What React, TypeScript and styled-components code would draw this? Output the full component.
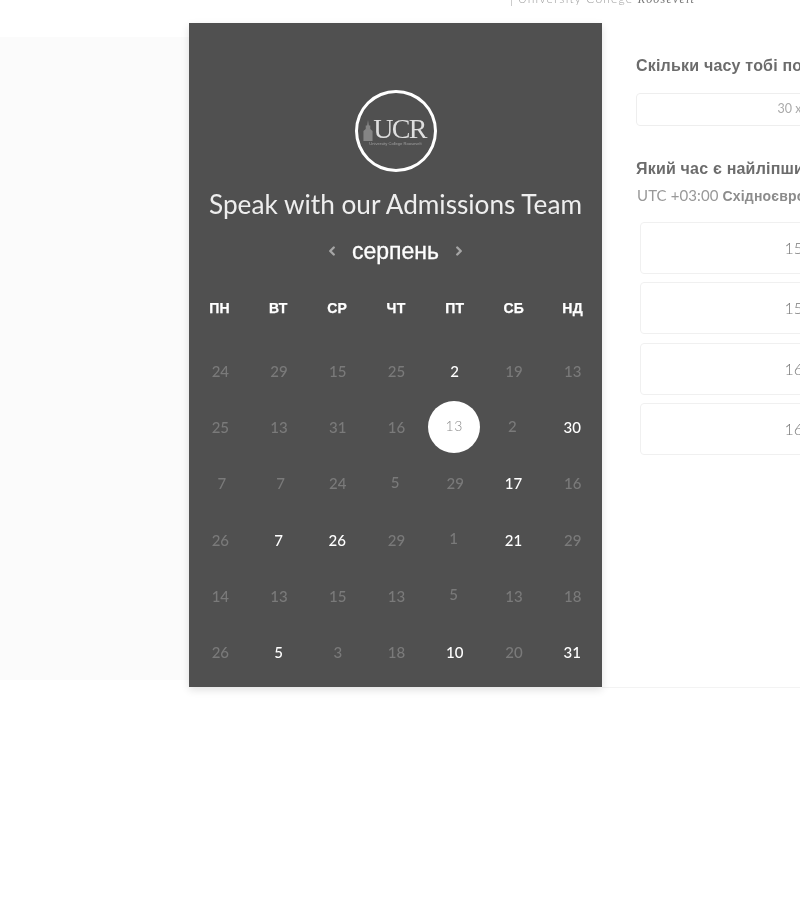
import React from "react";
import styled, { createGlobalStyle } from "styled-components";
import { ChevronLeft, ChevronRight } from "lucide-react";

const Global = createGlobalStyle`
  html, body { margin: 0; padding: 0; background: #fff; overflow: hidden; }
  body { width: 800px; height: 900px; font-family: "Liberation Sans", Arial, sans-serif; }
`;

const Page = styled.div`
  width: 800px;
  height: 900px;
  overflow: hidden;
  display: flex;
  flex-direction: column;
  will-change: opacity;
`;

const Header = styled.header`
  height: 23px;
  flex: none;
  overflow: hidden;
  display: flex;
  align-items: flex-start;
  padding-left: 511px;
`;

const Brand = styled.div`
  margin-top: -8px;
  height: 14px;
  padding-left: 6px;
  border-left: 1px solid #ccc;
  font: 300 12px/13px "Lato", sans-serif;
  letter-spacing: 1.2px;
  color: #999;
  white-space: nowrap;
`;

const BrandItalic = styled.span`
  font: italic 400 12px/13px "Liberation Serif", serif;
  color: #777;
`;

const Main = styled.main`
  display: flex;
  height: 664px;
  flex: none;
`;

const LeftPane = styled.div`
  width: 189px;
  flex: none;
  margin: 14px 0 7px;
  background: #fbfbfb;
`;

const Panel = styled.section`
  width: 413px;
  flex: none;
  box-sizing: border-box;
  padding: 67px 0 7px 2px;
  background: #505050;
  box-shadow: 0 3px 8px rgba(0, 0, 0, 0.12);
  display: flex;
  flex-direction: column;
  align-items: center;
  position: relative;
`;

const LogoCircle = styled.div`
  width: 82px;
  height: 82px;
  margin-left: -2px;
  box-sizing: border-box;
  border: 3px solid #fff;
  border-radius: 50%;
  display: flex;
  flex-direction: column;
  align-items: center;
  justify-content: center;
`;

const LogoRow = styled.div`
  display: flex;
  align-items: flex-end;
  height: 25px;
  margin-top: 2px;
`;

const LogoLetters = styled.span`
  font: 400 28px/25px "Liberation Serif", serif;
  letter-spacing: -1.7px;
  color: #dedede;
  margin-right: 2px;
`;

const LogoCaption = styled.span`
  font: 400 4.1px/6px "Liberation Sans", sans-serif;
  color: #a0a0a0;
  white-space: nowrap;
`;

const Title = styled.h1`
  margin: 16px 0 0 -2px;
  font: 400 26.2px/32px "Lato", sans-serif;
  color: #eeeeee;
  white-space: nowrap;
`;

const MonthRow = styled.div`
  margin: 16px 0 0 -2px;
  height: 30px;
  display: flex;
  align-items: center;
  gap: 13px;
  color: #a6a6a6;
`;

const MonthName = styled.span`
  font: 400 23px/30px "Liberation Sans", sans-serif;
  -webkit-text-stroke: 0.3px #fff;
  color: #fff;
`;

const Weekdays = styled.div`
  margin: 32px 0 0 -1px;
  align-self: stretch;
  display: grid;
  grid-template-columns: repeat(7, 1fr);
`;

const Weekday = styled.div`
  text-align: center;
  font: 700 14px/20px "Liberation Sans", sans-serif;
  letter-spacing: 0.2px;
  -webkit-text-stroke: 0.25px #fff;
  color: #fff;
`;

const Days = styled.div`
  margin-top: 25px;
  align-self: stretch;
  display: grid;
  grid-template-columns: repeat(7, 1fr);
  grid-auto-rows: 56.2px;
`;

const DayCell = styled.div`
  display: flex;
  align-items: center;
  justify-content: center;
`;

const DayNumber = styled.span<{ $kind: string }>`
  font: 500 15px/20px "Lato", sans-serif;
  color: ${(p) => (p.$kind === "bright" ? "#fff" : "#7a7a7a")};
  padding-bottom: ${(p) => (p.$kind === "nudged" ? "3px" : "0")};
  padding-right: ${(p) => (p.$kind === "nudged" ? "3px" : p.$kind === "bright" ? "1px" : "0")};
  padding-left: ${(p) => (p.$kind === "shifted" ? "3px" : "0")};
`;

const SelectedDay = styled.span`
  width: 52px;
  height: 52px;
  border-radius: 50%;
  background: #fff;
  color: #8a8a8a;
  font: 300 14px/50px "Lato", sans-serif;
  letter-spacing: 0.5px;
  text-align: center;
  margin-left: -2px;
`;

const RightPane = styled.div`
  flex: 1;
  min-width: 0;
  overflow: hidden;
  box-sizing: border-box;
  padding: 32px 0 0 34px;
  border-bottom: 1px solid #f3f3f3;
  height: 665px;
`;

const RightInner = styled.div`
  width: 342px;
`;

const Question = styled.h2`
  margin: 0;
  font: 700 16px/22px "Liberation Sans", sans-serif;
  letter-spacing: 0.2px;
  color: #6c6c6c;
  white-space: nowrap;
`;

const DurationBox = styled.div`
  margin-top: 16px;
  height: 33px;
  box-sizing: border-box;
  border: 1px solid #eee;
  border-radius: 4px;
  text-align: center;
  font: 400 12.5px/30px "Lato", sans-serif;
  color: #aaa;
`;

const SecondQuestion = styled(Question)`
  margin-top: 32px;
`;

const Zone = styled.div`
  margin: 5px 0 0 1px;
  font: 400 15px/20px "Lato", sans-serif;
  letter-spacing: 0.1px;
  color: #999;
  white-space: nowrap;
`;

const ZoneName = styled.b`
  font: 700 14px/20px "Liberation Sans", sans-serif;
  letter-spacing: 0.2px;
  color: #8c8c8c;
`;

const Slots = styled.div`
  margin: 16px 0 0 4px;
  width: 330px;
  display: flex;
  flex-direction: column;
  gap: 8.3px;
`;

const Slot = styled.div`
  height: 52px;
  box-sizing: border-box;
  border: 1px solid #f0f0f0;
  border-radius: 4px;
  text-align: center;
  font: 300 16px/50px "Lato", sans-serif;
  color: #777;
`;

const weekdays = ["ПН", "ВТ", "СР", "ЧТ", "ПТ", "СБ", "НД"];

const rows = [
  "24 29 15 25 *2 19 13",
  "25 13 31 16 #13 ^2 *30",
  "~7 ~7 24 ^5 29 *17 16",
  "26 *7 *26 29 ^1 *21 29",
  "14 13 15 13 ^5 13 18",
  "26 *5 3 18 *10 20 *31",
];

const days = rows.flatMap((r) => r.split(" "));

const kinds: Record<string, string> = { "*": "bright", "^": "nudged", "~": "shifted" };

function Tower() {
  return (
    <svg width="10" height="22" viewBox="0 0 11 24" fill="#858585">
      <path d="M5.5 1 L6.5 7 L8 7 L8 11 L10.5 13 L10.5 24 L0.5 24 L0.5 13 L3 11 L3 7 L4.5 7 Z" />
    </svg>
  );
}

export default function App() {
  return (
    <Page>
      <Global />
      <Header>
        <Brand>
          University College <BrandItalic>Roosevelt</BrandItalic>
        </Brand>
      </Header>
      <Main>
        <LeftPane />
        <Panel>
          <LogoCircle>
            <LogoRow>
              <Tower />
              <LogoLetters>UCR</LogoLetters>
            </LogoRow>
            <LogoCaption>University College Roosevelt</LogoCaption>
          </LogoCircle>
          <Title>Speak with our Admissions Team</Title>
          <MonthRow>
            <ChevronLeft size={14} strokeWidth={4} />
            <MonthName>серпень</MonthName>
            <ChevronRight size={14} strokeWidth={4} />
          </MonthRow>
          <Weekdays>
            {weekdays.map((d) => (
              <Weekday key={d}>{d}</Weekday>
            ))}
          </Weekdays>
          <Days>
            {days.map((d, i) => (
              <DayCell key={i}>
                {d[0] === "#" ? (
                  <SelectedDay>{d.slice(1)}</SelectedDay>
                ) : kinds[d[0]] ? (
                  <DayNumber $kind={kinds[d[0]]}>{d.slice(1)}</DayNumber>
                ) : (
                  <DayNumber $kind="dim">{d}</DayNumber>
                )}
              </DayCell>
            ))}
          </Days>
        </Panel>
        <RightPane>
          <RightInner>
            <Question>Скільки часу тобі потрібно?</Question>
            <DurationBox>30 хвилин</DurationBox>
            <SecondQuestion>Який час є найліпшим для тебе?</SecondQuestion>
            <Zone>
              UTC +03:00 <ZoneName>Східноєвропейський час</ZoneName>
            </Zone>
            <Slots>
              <Slot>15:00</Slot>
              <Slot>15:30</Slot>
              <Slot>16:00</Slot>
              <Slot>16:30</Slot>
            </Slots>
          </RightInner>
        </RightPane>
      </Main>
    </Page>
  );
}
